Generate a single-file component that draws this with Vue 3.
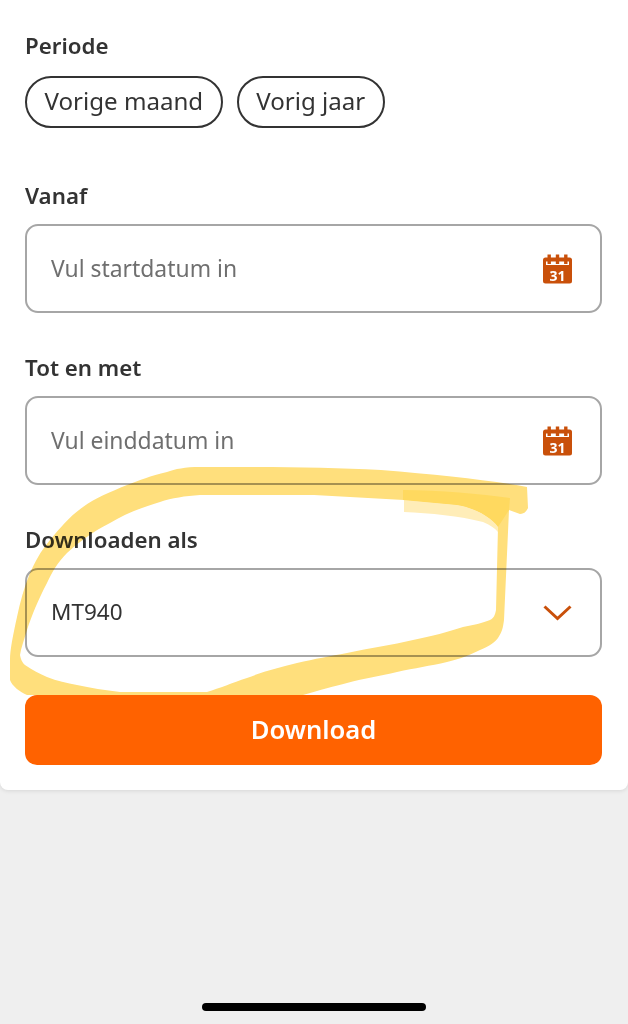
<script setup>
const presets = ['Vorige maand', 'Vorig jaar']
const dates = [
  { label: 'Vanaf', placeholder: 'Vul startdatum in' },
  { label: 'Tot en met', placeholder: 'Vul einddatum in' },
]
</script>

<template>
  <div class="page">
    <section class="card">
      <div class="label">Periode</div>
      <div class="chips">
        <button v-for="p in presets" :key="p" class="chip">{{ p }}</button>
      </div>

      <div v-for="d in dates" :key="d.label" class="field">
        <div class="label">{{ d.label }}</div>
        <div class="input">
          <span class="placeholder">{{ d.placeholder }}</span>
          <svg class="cal" width="30" height="30" viewBox="0 0 30 30">
            <rect x="1" y="3.500" width="29" height="26" rx="2.500" fill="#c9500a"/>
            <rect x="4" y="7.500" width="23" height="3.500" fill="#fff"/>
            <rect x="5.500" y="0.500" width="3.400" height="9.500" fill="#c9500a"/>
            <rect x="13.800" y="0.500" width="3.400" height="9.500" fill="#c9500a"/>
            <rect x="22.100" y="0.500" width="3.400" height="9.500" fill="#c9500a"/>
            <text x="15.500" y="27" text-anchor="middle" class="cal-num">31</text>
          </svg>
        </div>
      </div>

      <div class="field">
        <div class="label">Downloaden als</div>
        <div class="input">
          <span class="value">MT940</span>
          <svg class="chev" width="30" height="20" viewBox="0 0 30 20">
            <path d="M2.500 3.500 15.500 15.500 28.500 3.500" fill="none" stroke="#c9500a" stroke-width="3"/>
          </svg>
        </div>
      </div>

      <button class="download">Download</button>
    </section>

    <div class="home-bar"></div>

    <svg class="marker" width="628" height="1024" viewBox="0 0 628 1024">
      <path fill="#ffdf7c" fill-rule="evenodd" d="M527 487 C 490 480 440 475 381 470 C 340 468 300 467 250 467 L 200 467 C 185 467 175 469 167 472 C 150 476 140 480 127 485 C 110 492 95 498 83 507 C 70 516 60 528 50 540 C 40 552 35 562 30 573 C 24 588 20 602 17 617 C 13 635 10 650 10 660 L 10 680 C 12 686 20 692 27 695 L 303 695 C 320 690 335 686 347 683 C 365 678 380 676 397 672 C 415 668 430 666 447 662 C 460 659 470 655 480 650 C 490 646 495 642 498 638 C 502 632 503 628 504 620 L 509 510 L 520 514 C 525 514 527 510 528 508 Z M 498 527 C 490 515 470 507 457 505 L 404 500 L 314 495 L 200 495 C 185 496 172 498 160 502 C 140 508 125 514 110 523 C 92 532 78 543 67 553 C 58 562 52 572 47 583 C 38 600 32 615 27 630 C 24 640 21 648 20 655 C 21 660 22 662 25 665 C 32 670 40 674 47 677 C 57 681 67 683 77 685 C 90 688 105 690 120 692 L 207 692 C 220 688 232 683 247 678 C 262 672 280 667 297 663 C 315 659 330 656 347 653 C 370 648 392 645 413 640 C 432 636 448 632 463 627 C 473 625 483 623 490 620 C 494 618 495 615 496 610 Z"/>
      <path fill="#ffedb8" d="M404 500 L 404 512 C 430 513 460 516 483 522 C 490 525 495 528 498 532 L 498 527 C 490 515 470 507 457 505 Z"/>
      <path fill="#ffd95f" d="M403 490 C 440 490 480 494 510 498 L 509 510 L 498 527 C 490 515 470 507 457 505 L 403 500 Z"/>
    </svg>
  </div>
</template>

<style>
html, body { margin: 0; background: #efefef; }
</style>

<style scoped>
.page {
  position: relative;
  width: 628px;
  height: 1024px;
  overflow: hidden;
  background: #efefef;
  color: #333;
  font-family: "Noto Sans", "Open Sans", sans-serif;
}
.card {
  box-sizing: border-box;
  height: 790px;
  padding: 31px 26px 0 25px;
  background: #fff;
  border-radius: 0 0 8px 8px;
  box-shadow: 0 1px 4px rgba(0, 0, 0, .1);
}
.label {
  height: 30px;
  font-size: 22.300px;
  font-weight: 600;
  line-height: 30px;
  color: #333;
}
.chips {
  display: flex;
  gap: 14px;
  margin-top: 15px;
}
.chip {
  box-sizing: border-box;
  height: 52px;
  padding: 0 17.500px 2px;
  background: #fff;
  border: 2px solid #333;
  border-radius: 26px;
  font: 400 24.100px/1 "Noto Sans", sans-serif;
  color: #333;
}
.field { margin-top: 53px; }
.field + .field { margin-top: 40px; }
.field .label { margin-bottom: 13px; }
.input {
  box-sizing: border-box;
  display: flex;
  align-items: center;
  justify-content: space-between;
  height: 89px;
  padding: 0 28px 0 24px;
  border: 2px solid #a6a6a6;
  border-radius: 13px;
}
.placeholder { color: #6f6f6f; font-size: 22.900px; }
.value { color: #333; font-size: 22.500px; padding-bottom: 2px; }
.cal-num {
  font: 700 14px "Noto Sans", sans-serif;
  fill: #fff;
}
.download {
  display: block;
  width: 100%;
  height: 70px;
  margin-top: 38px;
  background: #ff6200;
  border: 0;
  border-radius: 12px;
  color: #fff;
  font: 600 25.600px/1 "Noto Sans", sans-serif;
}
.home-bar {
  position: absolute;
  left: 202px;
  top: 1003px;
  width: 224px;
  height: 8px;
  border-radius: 4px;
  background: #000;
}
.marker {
  position: absolute;
  inset: 0;
  mix-blend-mode: multiply;
  pointer-events: none;
}
</style>
